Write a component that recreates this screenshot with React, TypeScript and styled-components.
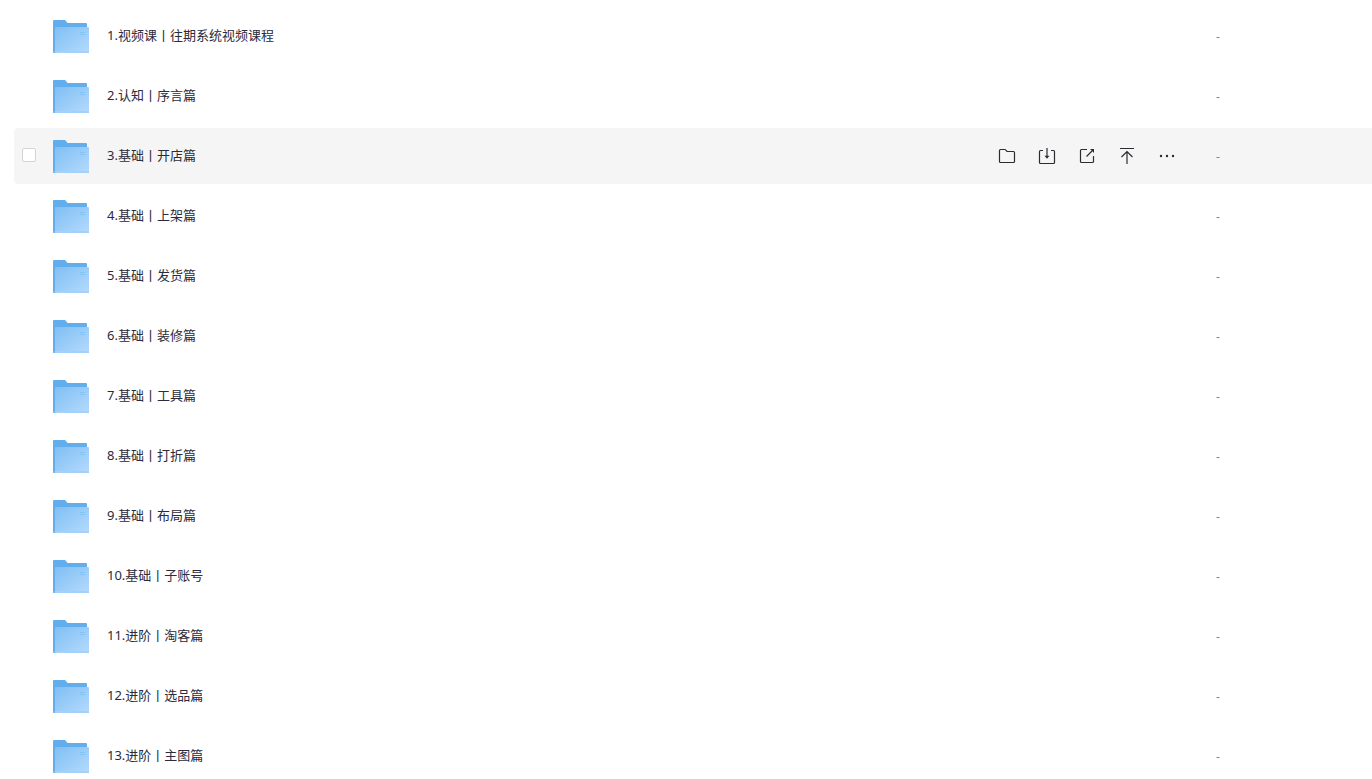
import React, { useState } from "react";
import styled, { createGlobalStyle } from "styled-components";

const GlobalStyle = createGlobalStyle`
  * { box-sizing: border-box; }
  body {
    margin: 0;
    background: #fff;
    font-family: "Noto Sans", "Noto Sans CJK SC", sans-serif;
    font-size: 13px;
    color: #2a2b3c;
  }
`;

const Page = styled.main`
  height: 100vh;
  overflow: hidden;
  padding: 8px 0 0 14px;
`;

const FileList = styled.ul`
  list-style: none;
  margin: 0;
  padding: 0;
  display: flex;
  flex-direction: column;
  gap: 4px;
`;

const Row = styled.li<{ $active: boolean }>`
  display: flex;
  align-items: center;
  height: 56px;
  padding-left: 8px;
  border-radius: 4px 0 0 4px;
  background: ${(p) => (p.$active ? "#f5f5f5" : "transparent")};
`;

const CheckSlot = styled.div`
  width: 30px;
  height: 16px;
  flex: none;
  display: flex;
`;

const Check = styled.input`
  appearance: none;
  width: 14px;
  height: 14px;
  margin: 0;
  border: 1px solid #d4d4d6;
  border-radius: 2px;
  background: #fff;
  &:checked { background: #637dff; border-color: #637dff; }
`;

const FolderArt = styled.svg`
  flex: none;
  width: 38px;
  height: 40px;
`;

const Name = styled.a`
  flex: 1;
  min-width: 0;
  margin-left: 17px;
  padding-bottom: 2px;
  line-height: 20px;
  color: inherit;
  text-decoration: none;
  white-space: nowrap;
`;

const Actions = styled.div`
  display: flex;
  gap: 16px;
  margin-right: 37px;
`;

const ActionButton = styled.button`
  width: 24px;
  height: 24px;
  padding: 0;
  border: 0;
  background: none;
  color: #2b2c33;
  svg { display: block; }
`;

const Size = styled.span`
  flex: none;
  width: 156px;
  padding-top: 2px;
  line-height: 20px;
  font-size: 12px;
  color: #84858d;
`;

const Folder = () => (
  <FolderArt viewBox="0 0 38 40" aria-hidden="true">
    <defs>
      <linearGradient id="front" x1="0" y1="0" x2="1" y2="1">
        <stop offset="0" stopColor="#80bff3" />
        <stop offset="1" stopColor="#b4dafd" />
      </linearGradient>
    </defs>
    <path d="M1 5a1 1 0 0 1 1-1h10.500q1 0 1.500 1l1.500 2H34a1 1 0 0 1 1 1v28H1z" fill="#62aeec" />
    <path d="M3 12a1 1 0 0 1 1-1h32a1 1 0 0 1 1 1v24.500q0 .5-.5.500H3z" fill="url(#front)" />
    <path d="M1 35h2v2H1z" fill="#72b7ef" />
    <path d="M3 35h34v1.500q0 .5-.5.500H3z" fill="#a3d1fa" />
    <path d="M28 16h5v1h-5zM28 18h5v1h-5z" fill="#84c2f5" />
  </FolderArt>
);

const actions = [
  {
    label: "移动到",
    art: <path d="M4.500 17.500V6.500Q4.500 5.500 5.500 5.500h4.300q.5 0 .8.400l1.400 1.600h6.500q1 0 1 1v9q0 1-1 1h-13q-1 0-1-1z" />,
  },
  {
    label: "下载",
    art: (
      <>
        <path d="M8 6.500H5.500q-1 0-1 1V18.500q0 1 1 1h13q1 0 1-1V7.500q0-1-1-1H16" />
        <path d="M12 4v9" />
        <path d="M9.500 11.800h5L12 14.800z" fill="currentColor" stroke="none" />
      </>
    ),
  },
  {
    label: "分享",
    art: (
      <>
        <path d="M12 5.500H6.500q-1 0-1 1v11q0 1 1 1h11q1 0 1-1V12M11.500 12.500l5.500-5.500" />
        <path d="M15 5h4v4z" fill="currentColor" stroke="none" />
      </>
    ),
  },
  { label: "置顶", art: <path d="M5 4.500h14M12 20V8M6.500 13L12 7.500l5.500 5.500" /> },
  {
    label: "更多",
    art: (
      <g fill="currentColor" stroke="none">
        <circle cx="6" cy="12" r="1.200" />
        <circle cx="12" cy="12" r="1.200" />
        <circle cx="18" cy="12" r="1.200" />
      </g>
    ),
  },
];

const folders = [
  "1.视频课丨往期系统视频课程",
  "2.认知丨序言篇",
  "3.基础丨开店篇",
  "4.基础丨上架篇",
  "5.基础丨发货篇",
  "6.基础丨装修篇",
  "7.基础丨工具篇",
  "8.基础丨打折篇",
  "9.基础丨布局篇",
  "10.基础丨子账号",
  "11.进阶丨淘客篇",
  "12.进阶丨选品篇",
  "13.进阶丨主图篇",
];

export default function App() {
  const [active, setActive] = useState(2);
  return (
    <Page lang="zh-CN">
      <GlobalStyle />
      <FileList>
        {folders.map((name, i) => (
          <Row key={name} $active={i === active} onMouseEnter={() => setActive(i)}>
            <CheckSlot>{i === active && <Check type="checkbox" aria-label={name} />}</CheckSlot>
            <Folder />
            <Name href="#">{name}</Name>
            {i === active && (
              <Actions>
                {actions.map((a) => (
                  <ActionButton key={a.label} type="button" aria-label={a.label}>
                    <svg width="24" height="24" viewBox="0 0 24 24" fill="none" stroke="currentColor" strokeWidth="1.200">
                      {a.art}
                    </svg>
                  </ActionButton>
                ))}
              </Actions>
            )}
            <Size>-</Size>
          </Row>
        ))}
      </FileList>
    </Page>
  );
}
